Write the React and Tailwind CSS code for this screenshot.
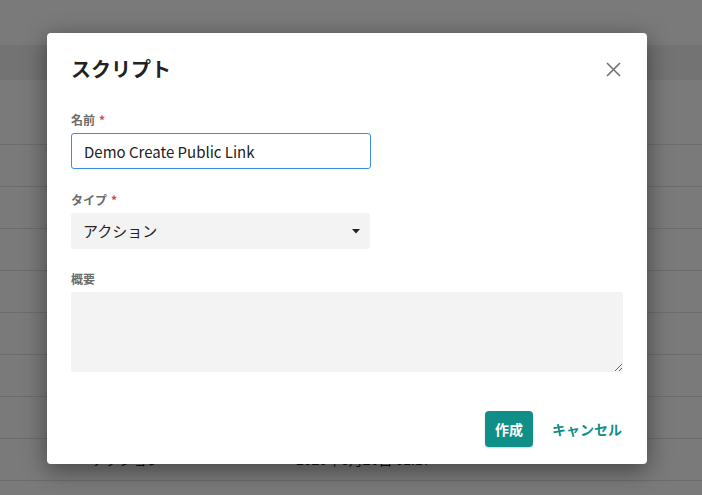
import React from "react";

const font = { fontFamily: '"Noto Sans CJK JP", "Noto Sans", sans-serif' };

const rows = [
  { type: "アクション", date: "2020年8月26日 01:17" },
  { type: "アクション", date: "2020年8月26日 01:17" },
  { type: "アクション", date: "2020年8月26日 01:17" },
  { type: "アクション", date: "2020年8月26日 01:17" },
  { type: "アクション", date: "2020年8月26日 01:17" },
  { type: "アクション", date: "2020年8月26日 01:17" },
  { type: "アクション", date: "2020年8月26日 01:17" },
  { type: "アクション", date: "2020年8月26日 01:17" },
];

const Label = ({ children, required }) => (
  <div className="text-[12px] leading-4 font-semibold text-[#6b6b6b] mb-[5px]">
    {children}
    {required && <span className="ml-1 text-[#e0433a]">*</span>}
  </div>
);

export default function App() {
  return (
    <div className="relative w-full h-[495px] overflow-hidden bg-white" style={font}>
      {/* page behind the dialog */}
      <div className="h-[45px]" />
      <div className="h-[35px] bg-[#f0f0f0]" />
      <div className="h-[65px] border-b border-[#e2e2e2]" />
      {rows.map((row, i) => (
        <div
          key={i}
          className="h-[42px] border-b border-[#e2e2e2] flex items-center text-[14px] text-[#222]"
        >
          <span className="ml-[92px] w-[204px]">{row.type}</span>
          <span>{row.date}</span>
        </div>
      ))}

      {/* overlay */}
      <div className="absolute inset-0 bg-black/[0.52] flex items-start pl-[47px] pt-[33px]">
        <div className="w-[600px] bg-white rounded-[4px] shadow-[0_6px_24px_rgba(0,0,0,0.45)] px-6 pt-[22px] pb-[17px]">
          <div className="flex items-center justify-between h-7">
            <h2 className="text-[20px] leading-7 font-bold text-[#222]">スクリプト</h2>
            <button className="w-4 h-4 flex items-center justify-center text-[#707070] mr-[2px]">
              <svg width="15" height="15" viewBox="0 0 15 15" fill="none" stroke="currentColor" strokeWidth="1.6">
                <path d="M1 1L14 14M14 1L1 14" />
              </svg>
            </button>
          </div>

          <div className="mt-[29px]">
            <Label required>名前</Label>
            <input
              readOnly
              value="Demo Create Public Link"
              className="w-[300px] h-9 rounded-[3px] border border-[#3a8fe3] px-3 text-[15px] text-[#222] outline-none"
              style={font}
            />
          </div>

          <div className="mt-[23px]">
            <Label required>タイプ</Label>
            <div className="w-[299px] h-9 rounded-[3px] bg-[#f3f3f3] pl-3 pr-[10px] flex items-center justify-between text-[15px] text-[#222]">
              <span>アクション</span>
              <svg width="8" height="5" viewBox="0 0 8 5" fill="#222">
                <path d="M0 0H8L4 4.5Z" />
              </svg>
            </div>
          </div>

          <div className="mt-[22px]">
            <Label>概要</Label>
            <textarea className="block w-full h-20 rounded-[3px] bg-[#f3f3f3] outline-none" />
          </div>

          <div className="mt-[39px] flex items-center justify-end gap-[19px] mr-[1px]">
            <button className="h-9 px-[10px] rounded-[4px] bg-[#0f8f88] text-white text-[14px] font-bold shadow-[0_1px_2px_rgba(0,0,0,0.2)]">
              作成
            </button>
            <button className="text-[14px] font-bold text-[#0f8f88]">キャンセル</button>
          </div>
        </div>
      </div>
    </div>
  );
}
